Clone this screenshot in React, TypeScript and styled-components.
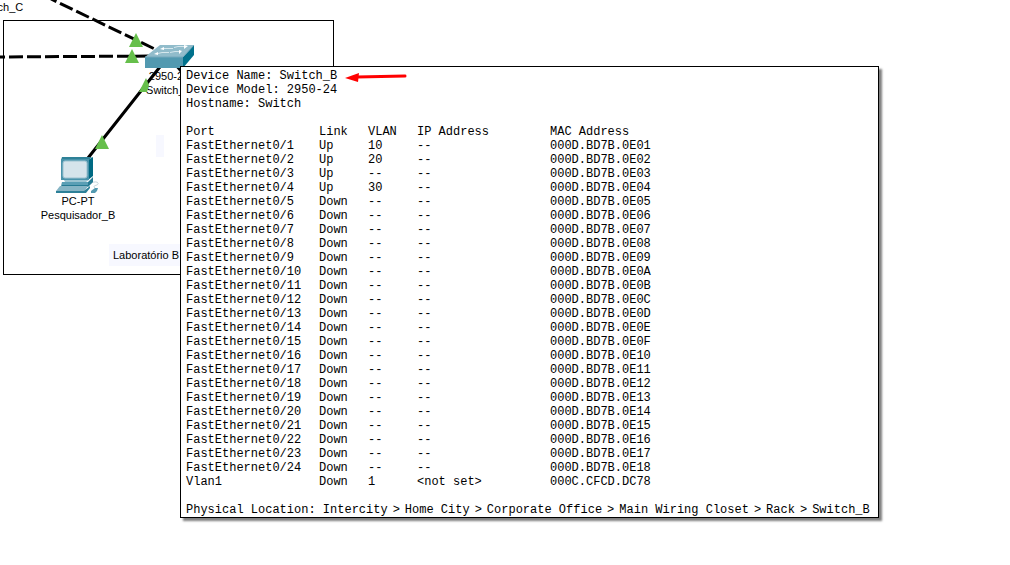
import React from "react";
import styled, { createGlobalStyle } from "styled-components";

const GlobalStyle = createGlobalStyle`
  body {
    margin: 0;
    background: #fff;
    color: #000;
  }
`;

const Workspace = styled.main`
  position: relative;
  min-height: 100vh;
  overflow: hidden;
  font: 11px/14px "Liberation Sans", Arial, sans-serif;
`;

const Area = styled.section<{ $x: number; $y: number; $w: number; $h: number }>`
  position: absolute;
  left: ${(p) => p.$x}px;
  top: ${(p) => p.$y}px;
  width: ${(p) => p.$w}px;
  height: ${(p) => p.$h}px;
  box-sizing: border-box;
  border: 1px solid #000;
`;

const Note = styled.div<{ $x: number; $y: number; $w: number }>`
  position: absolute;
  left: ${(p) => p.$x}px;
  top: ${(p) => p.$y}px;
  width: ${(p) => p.$w}px;
  height: 22px;
  box-sizing: border-box;
  padding: 4px;
  background: #f7f8ff;
  white-space: nowrap;
`;

const Drawing = styled.svg`
  position: absolute;
  left: 0;
  top: 0;
`;

const NodeLabel = styled.div<{ $x: number; $y: number }>`
  position: absolute;
  left: ${(p) => p.$x}px;
  top: ${(p) => p.$y}px;
  width: 80px;
  text-align: center;
  white-space: nowrap;
`;

const Tooltip = styled.aside`
  position: absolute;
  left: 180px;
  top: 66px;
  box-sizing: border-box;
  min-width: 699px;
  padding: 2px 5px 0;
  border: 1px solid #000;
  background: #fff;
  box-shadow: 3px 3px 2px rgba(0, 0, 0, 0.5);
  font: 12px/14px "Liberation Mono", "Courier New", monospace;
  white-space: nowrap;
`;

const Line = styled.p`
  margin: 0;
`;

const Location = styled.p`
  display: flex;
  gap: 5px;
  margin: 0;
`;

const Ports = styled.table`
  margin: 14px 0;
  border-collapse: collapse;
  table-layout: fixed;
  width: 497px;
`;

const Cell = styled.td`
  padding: 0;
`;

const Head = styled.th<{ $w: number }>`
  width: ${(p) => p.$w}px;
  padding: 0;
  font-weight: normal;
  text-align: left;
`;

const Pointer = styled.svg`
  position: absolute;
  left: 163px;
  top: 5px;
`;

const columns: [string, number][] = [
  ["Port", 133],
  ["Link", 49],
  ["VLAN", 49],
  ["IP Address", 133],
  ["MAC Address", 133],
];

const vlans: Record<number, string> = { 1: "10", 2: "20", 4: "30" };

const rows: string[][] = Array.from({ length: 24 }, (_, i) => {
  const n = i + 1;
  return [
    `FastEthernet0/${n}`,
    n <= 4 ? "Up" : "Down",
    vlans[n] ?? "--",
    "--",
    `000D.BD7B.0E${n.toString(16).toUpperCase().padStart(2, "0")}`,
  ];
});
rows.push(["Vlan1", "Down", "1", "<not set>", "000C.CFCD.DC78"]);

const places = ["Home City", "Corporate Office", "Main Wiring Closet", "Rack", "Switch_B"];

const Switch = () => (
  <g>
    <path d="M145 57L160 45H194L183 57Z" fill="#91bccb" />
    <path d="M145 57H183V68H145Z" fill="#5299b0" />
    <path d="M183 57L194 45V55L183 68Z" fill="#00718c" />
    <path d="M145 57H183L194 45" fill="none" stroke="#74a9bc" />
    <path d="M163 48.500H173M158 53.500L162 52.500H169M174 47.500L178 46.500H185M170 52.500L175 51.500H180" stroke="#d5e7ed" fill="none" />
    <path d="M160 49L164 47V50ZM154 54L158 52V55ZM188 46L184 45V49ZM182 51L179 50V54Z" fill="#fff" />
  </g>
);

const Computer = () => (
  <g>
    <path d="M91 183C95 181 99 182 98 184C97 186 92 185 95 188" fill="none" stroke="#c3d3d9" />
    <path d="M62 157H92L88 160H61Z" fill="#2e8197" />
    <path d="M88 160L93 157V176L88 180Z" fill="#006a83" />
    <path d="M61 159H89V180H61Z" fill="#4993ab" />
    <rect x="63" y="161" width="24" height="17" rx="2" fill="#d5e4eb" stroke="#9bc2d0" />
    <path d="M64 180H89L86 182H65Z" fill="#9bc4d1" />
    <path d="M62 182H88L93 177V182L88 187H61Z" fill="#267b93" />
    <path d="M62 182H88V185H62Z" fill="#5a9fb5" />
    <path d="M60 186H88L84 192H56V191Z" fill="#86b5c5" />
    <path d="M56 191H84L90 186V188L86 193H56Z" fill="#2c8098" />
    <path d="M91 191L95 188H98L97 191L95 193H91Z" fill="#5299b0" />
  </g>
);

export default function App() {
  return (
    <>
      <GlobalStyle />
      <Workspace>
        <Area $x={3} $y={20} $w={331} $h={255} aria-label="Laboratório B" />
        <Note $x={156} $y={135} $w={8} />
        <Note $x={109} $y={244} $w={74}>Laboratório B</Note>

        <Drawing width="340" height="280" aria-hidden="true">
          <g stroke="#000" strokeWidth="3">
            <path d="M51 -1L161 52" strokeDasharray="14 4" strokeDashoffset="8" />
            <path d="M0 57L155 56" strokeDasharray="14 4" strokeDashoffset="9" />
            <path d="M163 63L88 158M170 58L192 84" />
          </g>
          <Switch />
          <Computer />
        </Drawing>

        <NodeLabel $x={-40} $y={0}>
          <Line>Switch_C</Line>
        </NodeLabel>
        <NodeLabel $x={129} $y={69}>
          <Line>2950-24</Line>
          <Line>Switch_B</Line>
        </NodeLabel>
        <NodeLabel $x={38} $y={194}>
          <Line>PC-PT</Line>
          <Line>Pesquisador_B</Line>
        </NodeLabel>

        <Drawing width="340" height="280" aria-hidden="true">
          <g fill="#66bf4b">
            <path d="M136 33L143 47H129Z" />
            <path d="M132 49L139 63H125Z" />
            <path d="M146 78L149 85L147 92H139Z" />
            <path d="M102 135L109 149H95Z" />
          </g>
        </Drawing>

        <Tooltip role="tooltip">
          <Line>Device Name: Switch_B</Line>
          <Line>Device Model: 2950-24</Line>
          <Line>Hostname: Switch</Line>
          <Ports>
            <thead>
              <tr>
                {columns.map(([name, width]) => (
                  <Head key={name} $w={width} scope="col">
                    {name}
                  </Head>
                ))}
              </tr>
            </thead>
            <tbody>
              {rows.map((row) => (
                <tr key={row[0]}>
                  {row.map((value, i) => (
                    <Cell key={i}>{value}</Cell>
                  ))}
                </tr>
              ))}
            </tbody>
          </Ports>
          <Location>
            <span>Physical Location: Intercity</span>
            {places.map((place) => (
              <React.Fragment key={place}>
                <span>&gt;</span>
                <span>{place}</span>
              </React.Fragment>
            ))}
          </Location>
          <Pointer width="64" height="12" aria-hidden="true">
            <path d="M13 5L61 4" stroke="#f00" strokeWidth="3" strokeLinecap="round" />
            <path d="M1 6L15 1L14 10Z" fill="#f00" />
          </Pointer>
        </Tooltip>
      </Workspace>
    </>
  );
}
